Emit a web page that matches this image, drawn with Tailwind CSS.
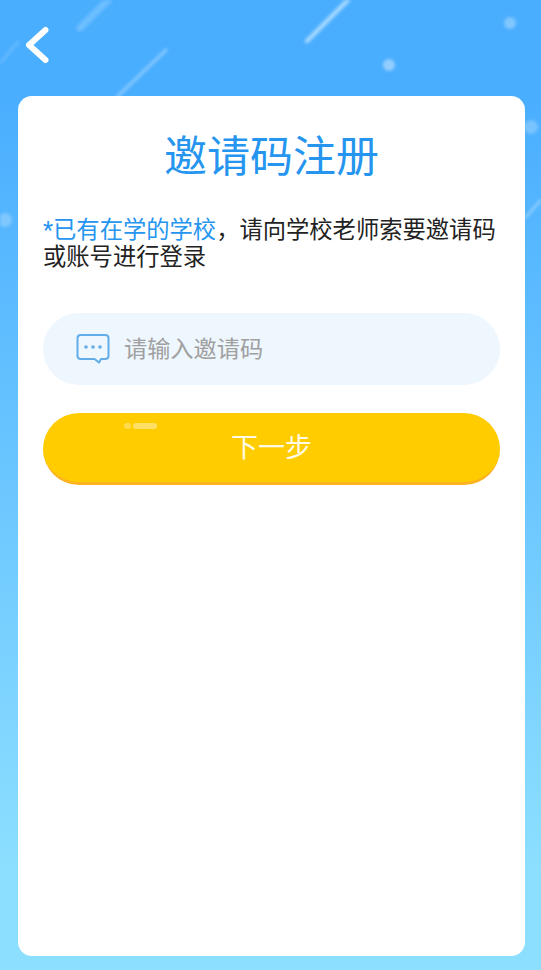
<!DOCTYPE html>
<html lang="zh-CN">
  <head>
    <meta charset="UTF-8" />
    <title>邀请码注册</title>
    <script src="https://cdn.jsdelivr.net/npm/@tailwindcss/browser@4"></script>
  </head>
  <body class="relative h-[970px] w-[541px] overflow-hidden bg-linear-to-b from-[#4aaeff] from-10% to-[#8cdfff] to-90% font-['Roboto','Noto_Sans_CJK_SC',sans-serif]">
    <!-- background streaks and dots -->
    <svg class="absolute inset-0 blur-[1.5px]" width="541" height="970" viewBox="0 0 541 970" fill="none">
      <g stroke="#fff" stroke-linecap="round">
        <path d="M80 28 L110 -2" stroke-width="7" opacity=".2" />
        <path d="M307 41 L350 -2" stroke-width="4.500" opacity=".5" />
        <path d="M118 96 L166 50" stroke-width="3.500" opacity=".3" />
        <path d="M0 63 L18 42" stroke-width="3" opacity=".15" />
        <path d="M526 217 L541 200" stroke-width="3" opacity=".3" />
      </g>
      <g fill="#fff">
        <circle cx="510" cy="23" r="6" opacity=".3" />
        <circle cx="389" cy="65" r="6" opacity=".4" />
        <circle cx="531" cy="127" r="7" opacity=".25" />
        <circle cx="5" cy="220" r="7" opacity=".25" />
      </g>
    </svg>

    <button class="absolute left-[24px] top-[26px] block h-[38px] w-[26px]">
      <svg width="26" height="38" viewBox="0 0 26 38" fill="none">
        <path d="M21.500 4 L5 19 L21.500 34" stroke="#fff" stroke-width="6" stroke-linecap="round" stroke-linejoin="round" />
      </svg>
    </button>

    <main class="absolute left-[18px] top-[96px] flex h-[860px] w-[507px] flex-col rounded-[14px] bg-white px-[25px]">
      <h1 class="mt-[33px] text-center text-[43px] leading-[56px] font-normal text-[#2595ef]">邀请码注册</h1>
      <p class="mt-[32px] text-[23.3px] leading-[27px] text-[#222]">
        <span class="text-[#2595ef]">*已有在学的学校</span>，请向学校老师索要邀请码或账号进行登录
      </p>
      <div class="mt-[42px] flex h-[72px] items-center rounded-full bg-[#eef6fe] pl-[33px]">
        <svg width="34" height="32" viewBox="0 0 34 32" fill="none">
          <path d="M5 2 H29 Q32.500 2 32.500 5 V23 Q32.500 26 29 26 H25 L23 29.500 L18.500 26 H5 Q1.500 26 1.500 23 V5 Q1.500 2 5 2 Z" stroke="#62ade8" stroke-width="2" stroke-linejoin="round" />
          <circle cx="10" cy="14" r="1.800" fill="#62ade8" />
          <circle cx="17" cy="14" r="1.800" fill="#62ade8" />
          <circle cx="24" cy="14" r="1.800" fill="#62ade8" />
        </svg>
        <span class="ml-[14px] pt-[1px] text-[23.2px] text-[#a0a0a0]">请输入邀请码</span>
      </div>
      <button class="relative mt-[28px] flex h-[72px] items-center justify-center rounded-full border-b-[3px] border-[#ffb11f] bg-[#ffcc00] pt-[2px] text-[27px] text-white/90">
        <span class="absolute left-[81px] top-[10px] flex items-center gap-[2px]">
          <span class="h-[6px] w-[7px] rounded-full bg-white/30"></span>
          <span class="h-[6px] w-[24px] rounded-full bg-white/40"></span>
        </span>
        下一步
      </button>
    </main>
  </body>
</html>
